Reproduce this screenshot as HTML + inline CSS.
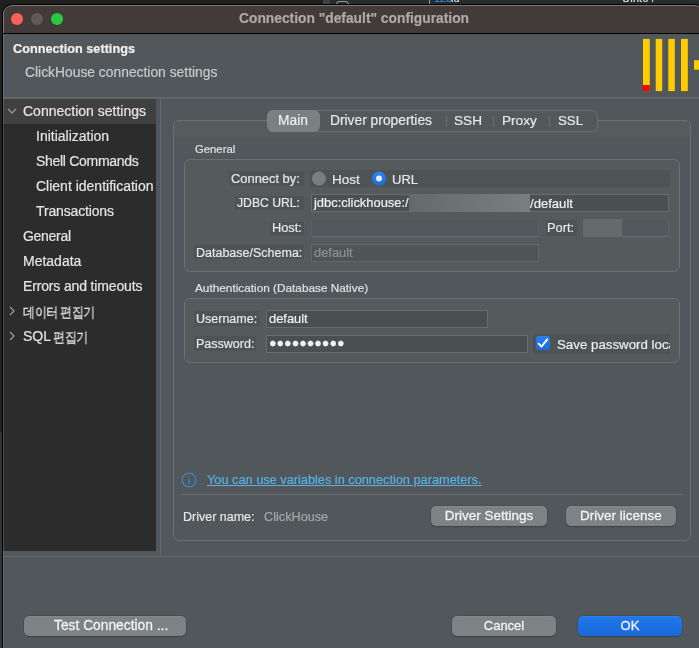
<!DOCTYPE html>
<html><head><meta charset="utf-8">
<style>
*{box-sizing:border-box;margin:0;padding:0}
html,body{width:699px;height:648px;overflow:hidden;background:#202020;font-family:"Liberation Sans",sans-serif}
.a{position:absolute}
.t{position:absolute;white-space:nowrap;line-height:1;will-change:transform;-webkit-text-stroke:.2px currentColor}
#win{position:absolute;left:2px;top:4px;width:703px;height:700px;border-radius:10px 10px 0 0;background:#000;}
#winin{position:absolute;left:3px;top:5px;width:701px;height:700px;border-radius:9px 9px 0 0;background:#807777;}
#title{position:absolute;left:4px;top:6px;width:699px;height:27px;border-radius:8px 8px 0 0;background:#433a3a}
#content{position:absolute;left:3px;top:34px;width:760px;height:700px;background:#51575a}
.dot{position:absolute;width:12px;height:12px;border-radius:50%}
.tree{color:#e4e4e4;font-size:14px}
.ko{font-size:14px;letter-spacing:-.5px;-webkit-text-stroke:.25px currentColor;transform:scaleX(.86);transform-origin:0 0}
.lbl{color:#e6e6e6;font-size:12.5px}
.lblbg{position:absolute;background:#4e5456}
.inp{position:absolute;background:#4a5052;border:1px solid #676d6f}
.dis{background:#52585b;border-color:#575d5f #5b6163 #696f71 #5b6163}
.btn{position:absolute;height:20px;border-radius:5px;background:#7d8284;box-shadow:0 0 0 .5px rgba(0,0,0,.2),0 1px 1px rgba(0,0,0,.18),inset 0 1px 0 rgba(255,255,255,.06);color:#f2f2f2;font-size:13.5px;text-align:center;line-height:20px;-webkit-text-stroke:.3px currentColor;will-change:transform}
</style></head><body>
<!-- background window content at top -->
<div class="a" style="left:330px;top:0;width:369px;height:6px;background:#282c2e"></div>
<div class="a" style="left:323px;top:0;width:7px;height:4px;background:#3c4446"></div>
<div class="a" style="left:336px;top:1px;width:13px;height:4px;border:1.5px solid #999;border-bottom:none;border-radius:4px 4px 0 0"></div>
<div class="a" style="left:429px;top:0;width:1px;height:4px;background:#999"></div>
<div class="t" style="left:434px;top:-7px;font-size:11px;color:#2a8ad8">125</div>
<div class="t" style="left:451px;top:-7px;font-size:11px;color:#ddd">id</div>
<div class="t" style="left:622px;top:-7px;font-size:11px;color:#ddd">UInt64</div>
<div id="win"></div>
<div id="winin"></div>
<div id="title"></div>
<div class="a" style="left:3px;top:33px;width:760px;height:1px;background:#000"></div>
<div class="dot" style="left:11px;top:13px;background:#fe5f57"></div>
<div class="dot" style="left:31px;top:13px;background:#625a5a"></div>
<div class="dot" style="left:51px;top:13px;background:#28c840"></div>
<div class="t" style="left:239px;top:12px;font-size:13.8px;font-weight:bold;color:#b0a8a8">Connection "default" configuration</div>

<div id="content"></div>
<!-- header -->
<div class="t" style="left:13px;top:43px;font-size:12.7px;font-weight:bold;color:#f0f0f0">Connection settings</div>
<div class="t" style="left:25px;top:66px;font-size:13.85px;color:#c9c9c9">ClickHouse connection settings</div>
<!-- logo -->
<svg class="a" style="left:630px;top:30px" width="69" height="70" viewBox="0 0 69 70"><g fill="#fecc00"><rect x="13" y="8.9" width="6.8" height="52.2"/><rect x="25.7" y="8.9" width="6.5" height="52.2"/><rect x="38.3" y="8.9" width="6.5" height="52.2"/><rect x="51" y="8.9" width="6.8" height="52.2"/><rect x="64" y="30.2" width="6" height="9.5"/></g><rect x="13" y="55" width="6.8" height="6.1" fill="#f00"/></svg>
<div class="a" style="left:4px;top:97px;width:760px;height:2px;background:#5c6365"></div><div class="a" style="left:4px;top:97px;width:760px;height:1px;background:#62696b"></div>

<!-- left tree -->
<div class="a" style="left:3px;top:99px;width:153px;height:452px;background:#2c2c2c"></div>
<div class="a" style="left:3px;top:99px;width:153px;height:25px;background:#404040"></div><div class="a" style="left:3px;top:34px;width:1px;height:614px;background:rgba(255,255,255,.15)"></div><div class="a" style="left:0;top:432px;width:2px;height:216px;background:#30363a"></div>
<svg class="a" style="left:7px;top:107px" width="10" height="8" viewBox="0 0 10 8"><path d="M1 2 L5 6 L9 2" fill="none" stroke="#9c9c9c" stroke-width="1.2"/></svg>
<div class="t tree" style="left:23px;top:104px">Connection settings</div>
<div class="t tree" style="left:36px;top:129px">Initialization</div>
<div class="t tree" style="left:36px;top:154px;letter-spacing:-.3px">Shell Commands</div>
<div class="t tree" style="left:36px;top:179px">Client identification</div>
<div class="t tree" style="left:36px;top:204px;letter-spacing:-.15px">Transactions</div>
<div class="t tree" style="left:23px;top:229px;letter-spacing:-.3px">General</div>
<div class="t tree" style="left:23px;top:254px">Metadata</div>
<div class="t tree" style="left:23px;top:279px;letter-spacing:-.15px">Errors and timeouts</div>
<svg class="a" style="left:8px;top:306px" width="8" height="10" viewBox="0 0 8 10"><path d="M2 1 L6 5 L2 9" fill="none" stroke="#9c9c9c" stroke-width="1.2"/></svg>
<div class="t tree ko" style="left:23px;top:305px">데이터</div><div class="t tree ko" style="left:60px;top:305px">편집기</div>
<svg class="a" style="left:8px;top:331px" width="8" height="10" viewBox="0 0 8 10"><path d="M2 1 L6 5 L2 9" fill="none" stroke="#9c9c9c" stroke-width="1.2"/></svg>
<div class="t tree" style="left:23px;top:329px">SQL</div><div class="t tree ko" style="left:53px;top:330px">편집기</div>

<div class="a" style="left:160px;top:99px;width:1px;height:457px;background:#646b6d"></div>
<div class="a" style="left:4px;top:556px;width:760px;height:1px;background:#646b6d"></div>

<!-- tab folder -->
<div class="a" style="left:173px;top:120px;width:518px;height:421px;border:1px solid #6b7173;border-radius:6px"></div>
<div class="a" style="left:174px;top:121px;width:516px;height:16px;background:#565c5e;border-radius:5px 5px 0 0"></div>

<!-- segmented -->
<div class="a" style="left:267px;top:110px;width:331px;height:22px;border:1px solid #696f71;border-radius:6px;background:#53595b"></div>
<div class="a" style="left:267px;top:110px;width:53px;height:22px;border-radius:6px;background:#7b8082"></div>
<div class="t" style="left:278px;top:114px;font-size:13.8px;color:#eeeeee">Main</div>
<div class="t" style="left:330px;top:114px;font-size:13.8px;color:#e6e6e6">Driver properties</div>
<div class="a" style="left:446px;top:116px;width:1px;height:11px;background:#6d7375"></div>
<div class="t" style="left:454px;top:114px;font-size:13.6px;color:#e6e6e6">SSH</div>
<div class="a" style="left:493px;top:116px;width:1px;height:11px;background:#6d7375"></div>
<div class="t" style="left:502px;top:114px;font-size:13.6px;color:#e6e6e6">Proxy</div>
<div class="a" style="left:549px;top:116px;width:1px;height:11px;background:#6d7375"></div>
<div class="t" style="left:558px;top:114px;font-size:13.3px;color:#e6e6e6">SSL</div>

<!-- General group -->
<div class="t" style="left:195px;top:144px;font-size:11.3px;color:#e0e0e0">General</div>
<div class="a" style="left:184px;top:159px;width:496px;height:113px;border:1px solid #6b7173;border-radius:6px;background:#555b5d"></div>

<div class="lblbg" style="left:229px;top:171px;width:75px;height:15px"></div>
<div class="t lbl" style="left:231px;top:173px;font-size:12.9px">Connect by:</div>
<div class="lblbg" style="left:310px;top:170px;width:360px;height:17px"></div>
<svg class="a" style="left:310px;top:170px" width="80" height="18" viewBox="0 0 80 18"><defs><linearGradient id="rb" x1="0" y1="0" x2="0" y2="1"><stop offset="0" stop-color="#2a84f4"/><stop offset="1" stop-color="#1a6cdf"/></linearGradient></defs><circle cx="9" cy="8.6" r="7" fill="#7b7e7f"/><circle cx="69" cy="8.6" r="7" fill="url(#rb)"/><circle cx="69" cy="8.6" r="3" fill="#e6eef8"/></svg>
<div class="t" style="left:332px;top:173px;font-size:13.5px;color:#e6e6e6">Host</div>


<div class="t" style="left:392px;top:173px;font-size:13px;color:#e6e6e6">URL</div>

<div class="lblbg" style="left:235px;top:196px;width:69px;height:14px"></div>
<div class="t lbl" style="left:237px;top:197px;font-size:12.2px">JDBC URL:</div>
<div class="inp" style="left:311px;top:194px;width:358px;height:18px"></div>
<div class="t" style="left:314px;top:197px;font-size:12.9px;color:#f0f0f0">jdbc:clickhouse:/</div>
<div class="a" style="left:409px;top:194px;width:121px;height:18px;background:linear-gradient(90deg,#646a6b,#7a7e7f)"></div>
<div class="t" style="left:530px;top:197px;font-size:13.1px;color:#f0f0f0">/default</div>

<div class="lblbg" style="left:270px;top:222px;width:34px;height:13px"></div>
<div class="t lbl" style="left:272px;top:222px;font-size:12.8px">Host:</div>
<div class="inp dis" style="left:311px;top:219px;width:228px;height:18px"></div>
<div class="lblbg" style="left:546px;top:220px;width:31px;height:16px"></div>
<div class="t lbl" style="left:547px;top:222px;font-size:12.8px">Port:</div>
<div class="inp dis" style="left:583px;top:219px;width:86px;height:18px"></div>
<div class="a" style="left:583px;top:219px;width:39px;height:18px;background:#656b6d"></div>

<div class="lblbg" style="left:194px;top:245px;width:110px;height:14px"></div>
<div class="t lbl" style="left:196px;top:247px">Database/Schema:</div>
<div class="inp" style="left:311px;top:244px;width:228px;height:18px;background:#4f5557;border-color:#62686a"></div>
<div class="t" style="left:314px;top:247px;font-size:12.9px;color:#8d9192">default</div>

<!-- Auth group -->
<div class="t" style="left:195px;top:283px;font-size:11.8px;color:#e0e0e0">Authentication (Database Native)</div>
<div class="a" style="left:184px;top:298px;width:496px;height:65px;border:1px solid #6b7173;border-radius:6px;background:#555b5d"></div>
<div class="lblbg" style="left:194px;top:311px;width:66px;height:15px"></div>
<div class="t lbl" style="left:196px;top:313px">Username:</div>
<div class="inp" style="left:266px;top:310px;width:222px;height:18px"></div>
<div class="t" style="left:269px;top:313px;font-size:12.9px;color:#f0f0f0">default</div>
<div class="lblbg" style="left:194px;top:336px;width:62px;height:15px"></div>
<div class="t lbl" style="left:196px;top:338px">Password:</div>
<div class="inp" style="left:266px;top:335px;width:262px;height:18px"></div>
<div class="t" style="left:269px;top:337px;font-size:12.5px;color:#f0f0f0;letter-spacing:0px">●●●●●●●●●●</div>
<div class="lblbg" style="left:533px;top:334px;width:137px;height:20px"></div>
<svg class="a" style="left:536px;top:336px" width="14" height="14" viewBox="0 0 14 14"><defs><linearGradient id="cb" x1="0" y1="0" x2="0" y2="1"><stop offset="0" stop-color="#2a80f0"/><stop offset="1" stop-color="#1c6ad8"/></linearGradient></defs><rect x="0" y="0" width="14" height="14" rx="3.2" fill="url(#cb)"/><path d="M2.6 7.7 L5.5 10.6 L11.2 3.3" fill="none" stroke="#fff" stroke-width="1.9" stroke-linecap="round" stroke-linejoin="round"/></svg>
<div class="a" style="left:556px;top:334px;width:114px;height:20px;overflow:hidden">
<div class="t" style="left:1px;top:4px;font-size:13.3px;color:#ececec">Save password locally</div></div>

<!-- info link -->
<svg class="a" style="left:181px;top:472px" width="16" height="16" viewBox="0 0 16 16"><circle cx="8" cy="8" r="6.8" fill="none" stroke="#3c88c8" stroke-width="1.2"/><rect x="7.4" y="7" width="1.2" height="5" fill="#3c88c8"/><rect x="7.4" y="4.2" width="1.2" height="1.3" fill="#3c88c8"/></svg>
<div class="t" style="left:207px;top:474px;font-size:12.75px;color:#5ab0e6;text-decoration:underline">You can use variables in connection parameters.</div>
<div class="a" style="left:181px;top:494px;width:502px;height:1px;background:#686e70"></div>
<div class="t" style="left:183px;top:511px;font-size:12.5px;color:#e6e6e6">Driver name:</div>
<div class="t" style="left:264px;top:511px;font-size:12.7px;color:#a4a8a9">ClickHouse</div>
<div class="btn" style="left:431px;top:506px;width:116px">Driver Settings</div>
<div class="btn" style="left:566px;top:506px;width:110px">Driver license</div>

<!-- bottom buttons -->
<div class="btn" style="left:24px;top:616px;width:162px;text-align:left;padding-left:30px;font-size:13.8px">Test Connection ...</div>
<div class="btn" style="left:452px;top:616px;width:104px;font-size:13px">Cancel</div>
<div class="btn" style="left:578px;top:616px;width:104px;font-size:13px;background:linear-gradient(#2177ea,#1a69da)">OK</div>
</body></html>
